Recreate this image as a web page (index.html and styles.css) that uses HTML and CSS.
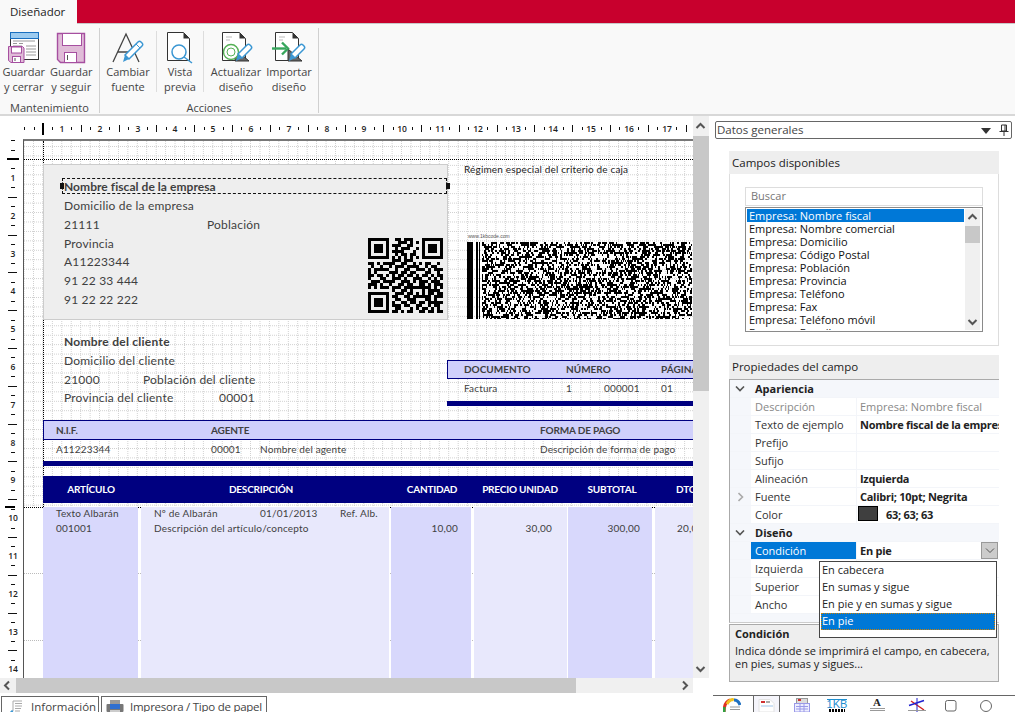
FILE: index.html
```html
<!DOCTYPE html>
<html lang="es">
<head>
<meta charset="utf-8">
<title>Diseñador</title>
<link rel="stylesheet" href="styles.css">
</head>
<body>
<div class="app">
  <header class="titlebar">
    <div class="tab-active">Diseñador</div>
    <div class="brand"></div>
  </header>

  <section class="ribbon">
    <div class="group group-a">
      <div class="buttons">
        <div class="rbtn w48">
          <svg class="ico" width="34" height="32" viewBox="1 0 34 32">
            <rect x="4.500" y="1.500" width="28" height="27" fill="#fff" stroke="#333"/>
            <rect x="4.500" y="1.500" width="28" height="6" fill="#9ccbf0" stroke="#1a6fbf"/>
            <path d="M7 10h22M7 12.500h4M13 12.500h4M20 15h10M20 18h10M20 21h10M20 24h10M7 15h9" stroke="#999" fill="none"/>
            <path d="M2.500 15.500h14l1.500 1.500v14.500h-13l-2.500-2z" fill="#e0bcd8" stroke="#a64fa0"/>
            <rect x="5.500" y="16" width="10" height="6" fill="#fff" stroke="#a64fa0"/>
            <rect x="6.500" y="25.500" width="8" height="6" fill="#fff" stroke="#a64fa0"/>
            <path d="M9 27v3" stroke="#555"/>
          </svg>
          <span>Guardar<br>y cerrar</span>
        </div>
        <div class="rbtn w48">
          <svg class="ico" width="34" height="32" viewBox="0 0 34 32">
            <path d="M3.500 2.500h27v29h-24l-3-3z" fill="#e0bcd8" stroke="#a64fa0" stroke-width="1.400"/>
            <rect x="8.500" y="2.500" width="19" height="12" fill="#fff" stroke="#a64fa0"/>
            <rect x="10.500" y="21.500" width="12" height="10" fill="#fff" stroke="#a64fa0"/>
            <path d="M13.500 24v5" stroke="#555"/>
          </svg>
          <span>Guardar<br>y seguir</span>
        </div>
      </div>
      <div class="glabel">Mantenimiento</div>
    </div>

    <div class="group group-b">
      <div class="buttons">
        <div class="rbtn w56 sep-r">
          <svg class="ico" width="34" height="32" viewBox="0 0 34 32">
            <path d="M2 31 L15 3 L28 31 M7 21h15" fill="none" stroke="#444" stroke-width="1.300"/>
            <path d="M14 24L27 11c1-1 2-1 3 0l1 1c1 1 1 2 0 3L18 28z" fill="#fff" stroke="#3b97d3" stroke-width="1.500"/>
            <path d="M14 24l4 4-6 3z" fill="#3b97d3"/>
            <path d="M25 13l4 4" stroke="#3b97d3"/>
          </svg>
          <span>Cambiar<br>fuente</span>
        </div>
        <div class="rbtn w47 sep-r">
          <svg class="ico" width="34" height="32" viewBox="0 0 34 32">
            <path d="M4.500 1.500h16l6 6v22h-22z" fill="#fff" stroke="#333"/>
            <path d="M20.500 1.500v6h6z" fill="#333"/>
            <circle cx="16" cy="21" r="7" fill="#fff" stroke="#3b97d3" stroke-width="1.500"/>
            <path d="M21 26l8 6" stroke="#3b97d3" stroke-width="1.500"/>
          </svg>
          <span>Vista<br>previa</span>
        </div>
        <div class="rbtn w64">
          <svg class="ico" width="34" height="32" viewBox="2 0 34 32">
            <path d="M5.500 1.500h17l6 6v22h-23z" fill="#fff" stroke="#333"/>
            <path d="M22.500 1.500v6h6z" fill="#333"/>
            <path d="M9 6h6M9 9h4" stroke="#bbb"/>
            <path d="M18 30l0-12 14 12z" fill="#666" stroke="#333"/>
            <circle cx="14" cy="21" r="7.500" fill="#fff" stroke="#55b055" stroke-width="1.400"/>
            <circle cx="14" cy="21" r="4" fill="none" stroke="#55b055"/>
            <path d="M21 23L30 14c1-1 2-1 3 0l1 1c1 1 1 2 0 3L25 27z" fill="#fff" stroke="#3b97d3" stroke-width="1.500"/>
            <path d="M21 23l4 4-6 3z" fill="#3b97d3"/>
          </svg>
          <span>Actualizar<br>diseño</span>
        </div>
        <div class="rbtn w42">
          <svg class="ico" width="34" height="32" viewBox="2 0 34 32">
            <path d="M5.500 1.500h17l6 6v22h-23z" fill="#fff" stroke="#333"/>
            <path d="M22.500 1.500v6h6z" fill="#333"/>
            <path d="M9 6h6M9 9h4" stroke="#bbb"/>
            <path d="M18 30l0-12 14 12z" fill="#666" stroke="#333"/>
            <path d="M2 17.500h14" stroke="#36a65c" stroke-width="2.400"/>
            <path d="M12 11.500l6 6-6 6" fill="none" stroke="#36a65c" stroke-width="2.400"/>
            <path d="M21 23L30 14c1-1 2-1 3 0l1 1c1 1 1 2 0 3L25 27z" fill="#fff" stroke="#3b97d3" stroke-width="1.500"/>
            <path d="M21 23l4 4-6 3z" fill="#3b97d3"/>
          </svg>
          <span>Importar<br>diseño</span>
        </div>
      </div>
      <div class="glabel">Acciones</div>
    </div>
  </section>

  <main class="main">
    <section class="workspace">
      <div class="designer">
        <div class="surface">
          <svg id="rulerTop" class="ruler-top" width="693" height="23"></svg>
          <svg id="rulerLeft" class="ruler-left" width="23" height="562"></svg>

          <div class="page">
            <div class="lower"></div>
            <div class="guide-v"></div>
            <div class="guide-h"></div>

            <div class="company">
              <div class="rline bold selected">Nombre fiscal de la empresa<i class="handle hl"></i><i class="handle hr"></i></div>
              <div class="rline">Domicilio de la empresa</div>
              <div class="rline split"><span class="c143">21111</span><span>Población</span></div>
              <div class="rline">Provincia</div>
              <div class="rline">A11223344</div>
              <div class="rline">91 22 33 444</div>
              <div class="rline">91 22 22 222</div>
              <canvas id="qr" class="qr" width="75" height="75"></canvas>
            </div>

            <div class="regimen">Régimen especial del criterio de caja</div>
            <div class="barcode-wrap">
              <div class="barcode-url">www.1kbcode.com</div>
              <canvas id="barcode" width="225" height="77"></canvas>
            </div>

            <div class="client">
              <div class="rline bold">Nombre del cliente</div>
              <div class="rline">Domicilio del cliente</div>
              <div class="rline split"><span class="c79">21000</span><span>Población del cliente</span></div>
              <div class="rline split"><span class="c155">Provincia del cliente</span><span>00001</span></div>
            </div>

            <div class="docblock">
              <div class="band band-doc">
                <span class="w102">DOCUMENTO</span><span class="w95">NÚMERO</span><span>PÁGINA</span>
              </div>
              <div class="vals vals-doc">
                <span class="w102">Factura</span><span class="w38">1</span><span class="w57">000001</span><span>01</span>
              </div>
              <div class="navybar"></div>
            </div>

            <div class="nifblock">
              <div class="band band-nif">
                <span class="w155">N.I.F.</span><span class="w329">AGENTE</span><span>FORMA DE PAGO</span>
              </div>
              <div class="vals vals-nif">
                <span class="w155">A11223344</span><span class="w49">00001</span><span class="w280">Nombre del agente</span><span>Descripción de forma de pago</span>
              </div>
              <div class="navybar"></div>
            </div>

            <div class="heads">
              <span class="h1">ARTÍCULO</span><span class="h2">DESCRIPCIÓN</span><span class="h3">CANTIDAD</span><span class="h4">PRECIO UNIDAD</span><span class="h5">SUBTOTAL</span><span class="h6">DTO</span>
            </div>

            <div class="cols">
              <div class="col col1 dark"><div>Texto Albarán</div><div>001001</div></div>
              <div class="col col2 light">
                <div class="split"><span class="w106">Nº de Albarán</span><span class="w80">01/01/2013</span><span>Ref. Alb.</span></div>
                <div>Descripción del artículo/concepto</div>
              </div>
              <div class="col col3 dark num"><div>&nbsp;</div><div>10,00</div></div>
              <div class="col col4 light num"><div>&nbsp;</div><div>30,00</div></div>
              <div class="col col5 dark num"><div>&nbsp;</div><div>300,00</div></div>
              <div class="col col6 light"><div>&nbsp;</div><div>20,00</div></div>
            </div>
          </div>
        </div>
        <div class="vscroll">
          <svg class="chev" width="15" height="20" viewBox="0 -1 15 20"><path d="M3.500 11l4-4 4 4" fill="none" stroke="#555" stroke-width="2"/></svg>
          <div class="vthumb"></div>
          <div class="grow"></div>
          <svg class="chev" width="15" height="18" viewBox="0 0 15 18"><path d="M3.500 7l4 4 4-4" fill="none" stroke="#555" stroke-width="2"/></svg>
        </div>
      </div>
      <div class="hscroll">
        <svg class="chev" width="16" height="15" viewBox="0 0 16 15"><path d="M9 3.500l-4 4 4 4" fill="none" stroke="#555" stroke-width="2"/></svg>
        <div class="hthumb"></div>
        <div class="grow"></div>
        <svg class="chev" width="17" height="15" viewBox="0 0 17 15"><path d="M7 3.500l4 4-4 4" fill="none" stroke="#555" stroke-width="2"/></svg>
      </div>
      <nav class="doc-tabs">
        <div class="dtab dtab-a">
          <svg class="dtab-ico" width="16" height="17" viewBox="0 0 16 17"><path d="M5 12V2h9M7 4.500h7M7 7h7M7 9.500h6M7 12h5" fill="none" stroke="#aaa"/><path d="M1 15l3-3 2 4" fill="none" stroke="#3b97d3" stroke-width="1.500"/><path d="M1 13v3" stroke="#e8a020" stroke-width="1.500"/></svg>
          <span>Información</span>
        </div>
        <div class="dtab dtab-b">
          <svg class="dtab-ico" width="18" height="16" viewBox="0 0 18 16"><rect x="0.500" y="5" width="17" height="8" rx="1" fill="#777"/><rect x="4" y="1" width="10" height="5" fill="#999"/><rect x="4" y="5" width="10" height="5" fill="#2f6fd0"/><rect x="4" y="11" width="10" height="4" fill="#ccc"/></svg>
          <span>Impresora / Tipo de papel</span>
        </div>
      </nav>
    </section>

    <aside class="side">
      <div class="combo">
        <span>Datos generales</span>
        <svg class="combo-arrow" width="10" height="6" viewBox="0 0 10 6"><path d="M0 0h10L5 6z" fill="#333"/></svg>
        <svg class="combo-pin" width="10" height="12" viewBox="0 0 10 12"><path d="M2.500 1h5v6h-5zM0.500 7.500h9M5 8v4M6 1v6" fill="none" stroke="#333"/></svg>
      </div>

      <section class="panel panel-fields">
        <h2 class="panel-head">Campos disponibles</h2>
        <div class="fields-body">
          <div class="search">Buscar</div>
          <div class="listbox">
            <ul class="items">
              <li class="on">Empresa: Nombre fiscal</li>
              <li>Empresa: Nombre comercial</li>
              <li>Empresa: Domicilio</li>
              <li>Empresa: Código Postal</li>
              <li>Empresa: Población</li>
              <li>Empresa: Provincia</li>
              <li>Empresa: Teléfono</li>
              <li>Empresa: Fax</li>
              <li>Empresa: Teléfono móvil</li>
              <li>Empresa: E-mail</li>
            </ul>
            <div class="list-scroll">
              <svg class="chev" width="15" height="17" viewBox="0 0 15 17"><path d="M3.500 10l4-4 4 4" fill="none" stroke="#555" stroke-width="2"/></svg>
              <div class="list-thumb"></div>
              <div class="grow"></div>
              <svg class="chev" width="15" height="17" viewBox="0 0 15 17"><path d="M3.500 7l4 4 4-4" fill="none" stroke="#555" stroke-width="2"/></svg>
            </div>
          </div>
        </div>
      </section>

      <section class="panel panel-props">
        <h2 class="panel-head head-props">Propiedades del campo</h2>
        <div class="propgrid">
          <div class="prow cat"><svg class="exp" width="10" height="6" viewBox="0 0 10 6"><path d="M1 0.500l4 4 4-4" fill="none" stroke="#555" stroke-width="1.600"/></svg><b>Apariencia</b></div>
          <div class="prow muted"><span class="k">Descripción</span><span class="v">Empresa: Nombre fiscal</span></div>
          <div class="prow"><span class="k">Texto de ejemplo</span><span class="v strong">Nombre fiscal de la empresa</span></div>
          <div class="prow"><span class="k">Prefijo</span><span class="v"></span></div>
          <div class="prow"><span class="k">Sufijo</span><span class="v"></span></div>
          <div class="prow"><span class="k">Alineación</span><span class="v strong">Izquierda</span></div>
          <div class="prow"><svg class="exp-r" width="6" height="10" viewBox="0 0 6 10"><path d="M0.500 1l4 4-4 4" fill="none" stroke="#aaa" stroke-width="1.600"/></svg><span class="k">Fuente</span><span class="v strong">Calibri; 10pt; Negrita</span></div>
          <div class="prow"><span class="k">Color</span><span class="v strong"><i class="swatch"></i>63; 63; 63</span></div>
          <div class="prow cat"><svg class="exp" width="10" height="6" viewBox="0 0 10 6"><path d="M1 0.500l4 4 4-4" fill="none" stroke="#555" stroke-width="1.600"/></svg><b>Diseño</b></div>
          <div class="prow sel"><span class="k">Condición</span><span class="v strong">En pie</span>
            <span class="dropbtn"><svg width="10" height="6" viewBox="0 0 10 6"><path d="M1 0.500l4 4 4-4" fill="none" stroke="#555"/></svg></span></div>
          <div class="prow"><span class="k">Izquierda</span><span class="v"></span></div>
          <div class="prow"><span class="k">Superior</span><span class="v"></span></div>
          <div class="prow"><span class="k">Ancho</span><span class="v"></span></div>
          <ul class="dropdown">
            <li>En cabecera</li>
            <li>En sumas y sigue</li>
            <li>En pie y en sumas y sigue</li>
            <li class="on">En pie</li>
          </ul>
        </div>
        <div class="help">
          <b>Condición</b>
          <p>Indica dónde se imprimirá el campo, en cabecera, en pies, sumas y sigues...</p>
        </div>
      </section>

      <nav class="side-tabs">
        <div class="stab"><svg width="18" height="14" viewBox="0 0 18 14"><path d="M1 14C1 6 4 3 7 2" fill="none" stroke="#e03020" stroke-width="3"/><path d="M4 6C6 2 9 1 11 2" fill="none" stroke="#f0c020" stroke-width="3"/><path d="M1 14V9" stroke="#30a040" stroke-width="3"/><path d="M11 2c3 0 5 2 6 5" fill="none" stroke="#2070c0" stroke-width="3"/><path d="M7 9h10M7 11.500h10" stroke="#999"/></svg></div>
        <div class="stab stab-on"><svg width="18" height="14" viewBox="0 0 18 14"><path d="M1 1.500h11l4 4V14H1z" fill="#fff" stroke="#e2e2e2"/><path d="M3 4h4" stroke="#d03030" stroke-width="2"/><path d="M8 4h4" stroke="#aaa" stroke-width="2"/><path d="M3 8h12" stroke="#cfe2f5" stroke-width="2"/></svg></div>
        <div class="stab"><svg width="18" height="14" viewBox="0 0 18 14"><rect x="3.500" y="0.500" width="11" height="6" fill="#ddd" stroke="#999"/><path d="M5 2h3" stroke="#d03030" stroke-width="2"/><rect x="1.500" y="5.500" width="15" height="8.500" fill="#eef" stroke="#9a9ae8"/><path d="M3 8.500h12M3 11h12M7 6v8M11 6v8" stroke="#9a9ae8"/></svg></div>
        <div class="stab stab-kb"><span class="kb">1KB</span><i class="kbbars"></i></div>
        <div class="stab stab-font"><span class="fa">A</span><i class="falines"></i></div>
        <div class="stab"><svg width="18" height="14" viewBox="0 0 18 14"><path d="M3 3l13 9" stroke="#d02020" stroke-width="1.400"/><path d="M1 7.500l15-5" stroke="#2020d0" stroke-width="1.400"/><path d="M9 0v14" stroke="#2020d0"/><path d="M0 12.500h18" stroke="#999"/></svg></div>
        <div class="stab"><svg width="14" height="14" viewBox="0 0 14 14"><rect x="1.500" y="2.500" width="10.500" height="10.500" rx="2" fill="none" stroke="#666"/></svg></div>
        <div class="stab"><svg width="14" height="14" viewBox="0 0 14 14"><circle cx="7" cy="8" r="5.500" fill="none" stroke="#666"/></svg></div>
      </nav>
    </aside>
  </main>
</div>
<script src="script.js"></script>
</body>
</html>
```

FILE: styles.css
```css
* { box-sizing: border-box; }
html, body { margin: 0; padding: 0; }
body {
  width: 1015px; height: 712px; overflow: hidden; background: #fff;
  font-family: "Open Sans", "Noto Sans", sans-serif; font-size: 11px; color: #333;
}
ul { list-style: none; margin: 0; padding: 0; }
p, h2 { margin: 0; font-weight: 400; }
i { font-style: normal; }
.grow { flex: 1; }
.chev { display: block; flex: none; }

.app { display: flex; flex-direction: column; height: 712px; }

/* title */
.titlebar { display: flex; height: 24px; background: #f9f9f9; }
.tab-active { width: 77px; height: 24px; line-height: 24px; padding-left: 10px; font-size: 11.500px; color: #222; background: #f9f9f9; }
.brand { flex: 1; height: 24px; background: #c8002d; border-bottom: 1px solid #c9c9c9; }

/* ribbon */
.ribbon { display: flex; height: 92px; background: #f9f9f9; border-bottom: 2px solid #d8d8d8; }
.group { display: flex; flex-direction: column; border-right: 1px solid #d0d0d0; margin: 4px 0 1px; }
.group-a { width: 100px; }
.group-b { width: 219px; }
.buttons { display: flex; height: 72px; padding-top: 3px; }
.rbtn { display: flex; flex-direction: column; align-items: center; white-space: nowrap; text-align: center; line-height: 15px; color: #444; margin-bottom: 8px; }
.rbtn .ico { flex: none; margin-bottom: 1px; overflow: visible; }
.w48 { width: 47.500px; }
.w56 { width: 57px; }
.w47 { width: 47px; }
.w64 { width: 64px; }
.w42 { width: 42px; }
.sep-r { border-right: 1px solid #ddd; }
.glabel { text-align: center; line-height: 15px; color: #444; }

/* main */
.main { display: flex; height: 596px; }
.workspace { width: 709px; display: flex; flex-direction: column; }
.designer { display: flex; height: 562px; }
.surface { position: relative; width: 693px; height: 562px; overflow: hidden; background: #fff; }
.ruler-top { position: absolute; left: 0; top: 0; font-family: "Open Sans", sans-serif; }
.ruler-left { position: absolute; left: 0; top: 0; font-family: "Open Sans", sans-serif; }
.ruler-text { font-size: 8.500px; font-weight: 600; fill: #222; }

.page {
  position: absolute; left: 23px; top: 23px; width: 670px; height: 539px;
  border-top: 2px solid #777; border-left: 1px solid #555;
  font-family: Lato, "Liberation Sans", sans-serif; color: #3f3f3f;
  background-color: #fff;
  background-image:
    conic-gradient(from 0deg at 1px 1px, transparent 75%, #cfcfcf 0),
    conic-gradient(from 0deg at 1px 1px, transparent 75%, #cfcfcf 0);
  background-size: 2px 9.450px, 9.450px 2px;
  background-position: 0 5px, 9px 0;
}
.lower {
  position: absolute; left: 0; right: 0; top: 366px; bottom: 0;
  background-color: #fff;
  background-image: conic-gradient(from 0deg at 1px 1px, transparent 75%, #bbb 0);
  background-size: 2px 67px;
  background-position: 0 66px;
}
.guide-v { position: absolute; left: 19px; top: 0; height: 366px; border-left: 1px dotted #000; }
.guide-h { position: absolute; left: 0; right: 0; top: 18px; border-top: 1px dotted #000; }
.lower::before { content: ""; position: absolute; left: 0; right: 0; top: 0; border-top: 1px dotted #000; }

.rline { height: 18.800px; line-height: 18.800px; font-size: 12px; letter-spacing: .2px; white-space: nowrap; }
.bold { font-weight: 700; letter-spacing: .25px; }
.split { display: flex; white-space: nowrap; }
.c143 { width: 143px; }
.c79 { width: 79px; }
.c155 { width: 155px; }

.company {
  position: absolute; left: 19px; top: 23px; width: 405px; height: 156px;
  padding: 13px 0 0 20px; background: #eee; border: 1px solid #ccc;
}
.selected { position: relative; margin-left: -2px; padding-left: 1px; height: 16px; line-height: 15px; margin-bottom: 3px; letter-spacing: .05px; border: 1px dashed #111; }
.handle { position: absolute; top: 4px; width: 4px; height: 6px; background: #111; }
.hl { left: -3px; }
.hr { right: -4px; }
.qr { position: absolute; left: 324px; top: 73px; }

.regimen { position: absolute; left: 440px; top: 22px; font-size: 10px; line-height: 13px; color: #222; letter-spacing: .16px; white-space: nowrap; }
.barcode-wrap { position: absolute; left: 443px; top: 91px; width: 225px; }
.barcode-url { height: 10px; font: 5px/8px "Liberation Sans", sans-serif; color: #555; padding-left: 1px; }
.barcode-wrap canvas { display: block; }

.client { position: absolute; left: 40px; top: 192px; }

.band { display: flex; align-items: center; background: #d0d0fb; font-weight: 700; font-size: 10px; white-space: nowrap; }
.vals { display: flex; align-items: center; font-size: 10px; letter-spacing: .15px; white-space: nowrap; }
.navybar { height: 5px; background: #000080; }

.docblock { position: absolute; left: 423px; top: 219px; width: 247px; }
.band-doc { height: 19px; padding: 0 0 2px 16px; border: 1px solid #000080; border-right: 0; }
.vals-doc { height: 22px; padding: 0 0 5px 17px; }
.w102 { width: 102px; flex: none; }
.w95 { width: 95px; flex: none; }
.w38 { width: 38px; flex: none; }
.w57 { width: 57px; flex: none; }

.nifblock { position: absolute; left: 19px; top: 279px; width: 651px; }
.band-nif { height: 20px; padding: 0 0 1px 12px; letter-spacing: -.15px; border: 1px solid #000080; border-width: 1px 0 1px 1px; }
.vals-nif { height: 21px; padding: 0 0 3px 13px; }
.w155 { width: 155px; flex: none; }
.w329 { width: 329px; flex: none; }
.w49 { width: 49px; flex: none; }
.w280 { width: 280px; flex: none; }

.heads { position: absolute; left: 19px; top: 335px; width: 651px; height: 27px; background: #000080; color: #fff; font-weight: 700; font-size: 10px; letter-spacing: -.2px; line-height: 27px; display: flex; white-space: nowrap; overflow: hidden; }
.heads span { flex: none; text-align: center; }
.heads .h1 { width: 96px; }
.heads .h2 { width: 244px; }
.heads .h3 { width: 98px; }
.heads .h4 { width: 78px; }
.heads .h5 { width: 106px; }
.heads .h6 { width: 29px; padding-left: 11px; text-align: left; }

.cols { position: absolute; left: 19px; top: 366px; width: 651px; height: 172px; display: flex; font-size: 10px; line-height: 15px; letter-spacing: .2px; }
.col { flex: none; white-space: nowrap; overflow: hidden; }
.col > div:first-child { margin-top: -1px; }
.dark { background: #d8d8fc; }
.light { background: #e8e8fc; }
.col1 { width: 95px; margin-right: 3px; padding-left: 13px; }
.col2 { width: 248px; margin-right: 2px; padding-left: 13px; }
.col3 { width: 80px; margin-right: 3px; }
.col4 { width: 93px; margin-right: 1px; }
.col5 { width: 84px; margin-right: 3px; }
.col6 { width: 38px; padding-left: 22px; }
.num { text-align: right; padding-right: 13px; }
.col4.num { padding-right: 15px; }
.col5.num { padding-right: 12px; }
.w106 { width: 106px; }
.w80 { width: 80px; }

.vscroll { width: 16px; display: flex; flex-direction: column; background: #f0f0f0; }
.vthumb { height: 255px; background: #c8c8c8; }
.hscroll { display: flex; height: 15px; background: #f0f0f0; width: 693px; }
.hthumb { width: 560px; background: #c8c8c8; }

.doc-tabs { display: flex; gap: 2px; padding: 3px 0 0 1px; overflow: hidden; height: 19px; }
.dtab { display: flex; align-items: flex-start; flex: none; height: 20px; padding-top: 2px; border: 1px solid #666; font-size: 11.500px; color: #444; line-height: 15px; white-space: nowrap; background: #fff; }
.dtab-ico { flex: none; }
.dtab-a { width: 98px; padding-left: 6px; gap: 7px; }
.dtab-b { width: 166px; padding-left: 4px; gap: 6px; letter-spacing: -.25px; }

/* side */
.side { width: 306px; display: flex; flex-direction: column; padding-top: 5px; position: relative; color: #222; }
.combo { position: relative; display: flex; align-items: center; margin-left: 6px; width: 297px; height: 18px; padding: 0 0 1px 1px; border: 1px solid #666; border-radius: 2px; font-size: 11.500px; color: #444; }
.combo-arrow { position: absolute; left: 265px; top: 6px; }
.combo-pin { position: absolute; left: 283px; top: 2px; }
.panel { margin-left: 20px; width: 270px; }
.panel-head { height: 23px; padding-left: 3px; line-height: 23px; font-size: 11.500px; background: #eee; color: #222; }
.panel-fields { margin-top: 12px; height: 195px; border-bottom: 1px solid #ddd; }
.fields-body { height: 172px; padding: 13px 15px 0; border: 1px solid #ddd; border-width: 0 1px 1px; }
.search { height: 19px; padding-left: 5px; border: 1px solid #ddd; font-size: 11px; line-height: 16px; color: #777; background: #fff; }
.listbox { display: flex; height: 125px; margin-top: 1px; padding: 1px; border: 1px solid #8a8a8a; overflow: hidden; }
.items { width: 217px; margin-right: 1px; font-size: 11px; line-height: 13px; color: #111; overflow: hidden; }
.items li { height: 13px; padding-left: 2px; white-space: nowrap; }
.items .on { background: #0078d7; color: #fff; }
.list-scroll { width: 15px; display: flex; flex-direction: column; background: #f0f0f0; }
.list-thumb { height: 17px; background: #c8c8c8; }

.panel-props { margin-top: 9px; }
.head-props { height: 24px; line-height: 24px; }
.propgrid { position: relative; height: 244px; border: 1px solid #aaa; border-bottom-color: #ccc; border-right: 0; background: #f5f7fb; font-size: 11px; }
.prow { position: relative; display: flex; height: 18px; padding-left: 21px; line-height: 17px; border-bottom: 1px solid #f3f5f9; white-space: nowrap; overflow: hidden; }
.prow .k { width: 105px; flex: none; padding-left: 4px; background: #fff; color: #333; }
.prow .v { flex: 1; padding-left: 3px; background: #fff; border-left: 1px solid #f3f5f9; overflow: hidden; }
.prow .strong { font-weight: 700; color: #222; letter-spacing: -.27px; }
.cat { padding-left: 25px; color: #222; }
.exp { position: absolute; left: 5px; top: 6px; }
.exp-r { position: absolute; left: 8px; top: 4px; }
.prow.muted .k, .prow.muted .v { color: #888; }
.swatch { display: inline-block; vertical-align: -2px; width: 20px; height: 15px; margin: 0 8px 0 -2px; background: #3f3f3f; border: 1px solid #000; }
.prow.sel .k { background: #0078d7; color: #fff; }
.dropbtn { position: absolute; right: 1px; top: 0; width: 17px; height: 17px; background: #ccc; border: 1px solid #999; display: flex; align-items: center; justify-content: center; }
.dropdown { position: absolute; left: 89px; top: 181px; width: 178px; height: 77px; padding: 0 1px; background: #fff; border: 1px solid #444; font-size: 11px; line-height: 15px; color: #222; z-index: 2; }
.dropdown li { height: 17px; padding-left: 1px; }
.dropdown .on { background: #0078d7; color: #fff; outline: 1px dotted #d08000; outline-offset: -1px; }

.help { margin-top: 1px; height: 58px; padding: 2px 5px; background: #eee; border: 1px solid #aaa; font-size: 11px; line-height: 13px; color: #222; }
.help b { display: block; height: 17px; line-height: 13px; }

.side-tabs { position: absolute; left: 4px; right: 0; top: 579px; height: 17px; border-top: 1px solid #666; display: flex; overflow: hidden; }
.stab { position: relative; width: 36px; display: flex; justify-content: center; padding-top: 2px; }
.stab-on { width: 27px; background: #f5f5fb; border-left: 1px solid #666; border-right: 1px solid #666; margin-top: -1px; padding-top: 3px; }
.stab-kb { display: block; text-align: center; font: 11px/9px "Liberation Sans", sans-serif; padding-top: 3px; }
.kb { color: #1f8fd0; border-top: 1px solid #1f8fd0; display: inline-block; line-height: 9px; }
.kbbars { display: block; width: 16px; height: 5px; margin: 0 auto; background: repeating-linear-gradient(90deg, #000 0 2px, #fff 2px 3px); }
.stab-font { display: block; text-align: center; padding-top: 1px; }
.fa { display: block; font: 700 11px/10px "Liberation Serif", serif; color: #222; }
.falines { display: block; width: 15px; height: 3px; margin: 1px auto 0; border-top: 1px solid #999; border-bottom: 1px solid #999; }
.stab:nth-child(1) { width: 40px; padding-right: 2px; }
.stab:nth-child(3) { width: 44px; }
.stab:nth-child(4) { width: 26px; }
.stab:nth-child(5) { width: 54px; }
.stab:nth-child(6) { width: 26px; }
.stab:nth-child(7) { width: 42px; }
.stab:nth-child(8) { width: 28px; }
```

FILE: script.js
```js
(function () {
  var NS = "http://www.w3.org/2000/svg";
  function el(svg, name, attrs, text) {
    var n = document.createElementNS(NS, name);
    for (var k in attrs) n.setAttribute(k, attrs[k]);
    if (text) n.textContent = text;
    svg.appendChild(n);
  }
  var STEP = 37.8 / 4;

  // top ruler
  var top = document.getElementById("rulerTop");
  for (var i = -2; i < 70; i++) {
    var x = Math.round(43 + i * STEP);
    var q = ((i % 4) + 4) % 4;
    if (i === 0) { el(top, "rect", { x: x - 1, y: 7, width: 2, height: 12, fill: "#000" }); continue; }
    if (q === 2 && i > 0) {
      el(top, "text", { x: x, y: 16, "text-anchor": "middle", "class": "ruler-text" }, String((i + 2) / 4));
    } else if (q === 0) {
      el(top, "rect", { x: x, y: 9, width: 1, height: 7, fill: "#111" });
    } else {
      el(top, "rect", { x: x, y: 11, width: 1, height: 3, fill: "#111" });
    }
  }

  // left ruler
  var left = document.getElementById("rulerLeft");
  for (var j = -2; j < 60; j++) {
    var y = Math.round(43 + j * STEP);
    var p = ((j % 4) + 4) % 4;
    if (j === 0) { el(left, "rect", { x: 7, y: y - 1, width: 12, height: 2, fill: "#000" }); continue; }
    if (p === 2 && j > 0) {
      el(left, "text", { x: 13, y: y + 3, "text-anchor": "middle", "class": "ruler-text" }, String((j + 2) / 4));
    } else if (p === 0) {
      el(left, "rect", { x: 8, y: y, width: 9, height: 1, fill: "#111" });
    } else {
      el(left, "rect", { x: 11, y: y, width: 4, height: 1, fill: "#111" });
    }
  }
  el(left, "rect", { x: 5, y: 390, width: 10, height: 2, fill: "#000" });

  // QR code, 25 modules of 3px
  var Q = [
    "1111111001101110001111111",
    "1000001000111010101000001",
    "1011101011100110001011101",
    "1011101001011100101011101",
    "1011101011110001001011101",
    "1000001001011011001000001",
    "1111111010101010101111111",
    "0000000011101110000000000",
    "1101011110011001010110010",
    "0100100101110111100101100",
    "1011111001001100111010111",
    "1010000111011011000110010",
    "1101101010110110101101011",
    "1000110011101001110010101",
    "0111011110011101011101110",
    "1110100100110110011010111",
    "1010111011101111111110101",
    "0000000010011010001011110",
    "1111111001110110101011011",
    "1000001011001101111110111",
    "1011101001100111000110100",
    "1011101010011011011011111",
    "1011101011101100110010110",
    "1000001001100010101101010",
    "1111111011010110011011011"
  ];
  var qc = document.getElementById("qr").getContext("2d");
  qc.fillStyle = "#000";
  Q.forEach(function (row, r) {
    for (var c = 0; c < row.length; c++) {
      if (row[c] === "1") qc.fillRect(c * 3, r * 3, 3, 3);
    }
  });

  // PDF417-like barcode
  var bc = document.getElementById("barcode").getContext("2d");
  bc.fillStyle = "#000";
  [[0, 6], [9, 2], [12, 1]].forEach(function (b) { bc.fillRect(b[0], 0, b[1], 77); });
  var seed = 12345;
  function rnd() { seed = (seed * 1103515245 + 12345) & 0x7fffffff; return seed / 0x7fffffff; }
  for (var ry = 0; ry < 77; ry += 2) {
    var bx = 15;
    while (bx < 225) {
      var w = 1 + Math.floor(rnd() * 2);
      if (rnd() < 0.5) bc.fillRect(bx, ry, w, 2);
      bx += w;
    }
  }
})();
```
